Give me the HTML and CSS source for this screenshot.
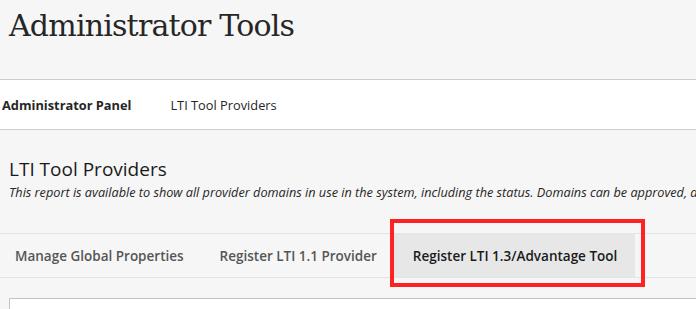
FILE: index.html
```html
<!DOCTYPE html>
<html lang="en">
<head>
  <meta charset="UTF-8">
  <title>Administrator Tools</title>
  <link rel="stylesheet" href="styles.css">
</head>
<body>
  <!-- Page title -->
  <header class="page-header">
    <h1 class="page-title">Administrator Tools</h1>
  </header>

  <!-- Breadcrumbs -->
  <nav class="breadcrumbs">
    <span class="crumb crumb-root">Administrator Panel</span>
    <span class="crumb">LTI Tool Providers</span>
  </nav>

  <!-- Content -->
  <main class="content">
    <h2 class="section-title">LTI Tool Providers</h2>
    <p class="section-desc">This report is available to show all provider domains in use in the system, including the status. Domains can be approved, denied or blocked.</p>

    <ul class="tabs">
      <li class="tab">Manage Global Properties</li>
      <li class="tab">Register LTI 1.1 Provider</li>
      <li class="tab tab-active">Register LTI 1.3/Advantage Tool</li>
    </ul>

    <div class="panel"></div>
  </main>
</body>
</html>
```

FILE: styles.css
```css
/* General */
body {
  margin: 0;
  background-color: #f6f6f6;
  font-family: "Open Sans", Arial, sans-serif;
  color: #262626;
  overflow: hidden;
}

/* Page title */
.page-header {
  box-sizing: border-box;
  height: 80px;
  border-bottom: 1px solid #cdcdcd;
}

.page-title {
  margin: 0;
  padding: 6px 0 0 9px;
  font-family: "DejaVu Serif", "Liberation Serif", serif;
  font-weight: normal;
  font-size: 30px;
  letter-spacing: -0.8px;
  line-height: 40px;
  color: #262626;
  white-space: nowrap;
}

/* Breadcrumbs */
.breadcrumbs {
  display: flex;
  align-items: center;
  gap: 39px;
  height: 49px;
  padding-left: 2px;
  background-color: #fff;
  border-bottom: 1px solid #cdcdcd;
  font-size: 12.8px;
  white-space: nowrap;
}

.crumb-root {
  font-weight: bold;
  color: #111;
}

.crumb {
  color: #262626;
}

/* Content */
.content {
  padding: 26px 0 0 9px;
}

.section-title {
  margin: 0;
  font-size: 19px;
  font-weight: normal;
  line-height: 26px;
  color: #1a1a1a;
}

.section-desc {
  margin: 2px 0 0;
  font-size: 12.7px;
  font-style: italic;
  line-height: 17px;
  color: #262626;
  white-space: nowrap;
  overflow: hidden;
}

/* Tabs */
.tabs {
  display: flex;
  height: 43px;
  margin: 32px 0 0 -9px;
  padding: 0 0 0 6px;
  list-style: none;
  border-top: 1px solid #e4e4e4;
  border-bottom: 1px solid #e4e4e4;
}

.tab {
  display: flex;
  align-items: center;
  padding: 0 9px;
  margin-right: 18px;
  font-size: 13.5px;
  font-weight: 600;
  color: #555;
  white-space: nowrap;
}

.tab-active {
  position: relative;
  padding: 0 18px 0 20px;
  margin-left: -11px;
  background-color: #e7e7e7;
  color: #1a1a1a;
}

/* Red highlight drawn over the active tab */
.tab-active::after {
  content: "";
  position: absolute;
  top: -15px;
  bottom: -10px;
  left: -3px;
  right: -10px;
  border: 4px solid #ff2222;
}

/* Panel */
.panel {
  margin-top: 20px;
  height: 40px;
  background-color: #fff;
  border: 1px solid #c4c4c4;
  border-right: none;
}
```
